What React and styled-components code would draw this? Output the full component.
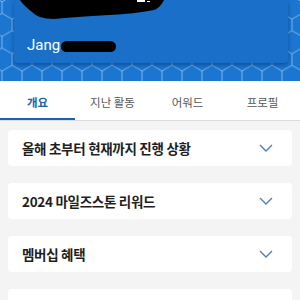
import React from 'react';
import styled, { createGlobalStyle } from 'styled-components';

const GlobalStyle = createGlobalStyle`
  html, body { margin: 0; padding: 0; }
  body {
    width: 300px;
    height: 300px;
    overflow: hidden;
    background: #f4f4f4;
    font-family: "Noto Sans CJK KR", "Noto Sans", sans-serif;
  }
`;

const Page = styled.div`
  width: 300px;
  height: 300px;
  overflow: hidden;
  background: #f4f4f4;
`;

const Header = styled.div`
  position: relative;
  height: 81px;
  background: #1b76d1;
  overflow: hidden;
`;

const PatternLayer = styled.svg`
  position: absolute;
  inset: 0;
`;

const MemberCard = styled.div`
  position: relative;
  margin: 0 12px 0 14px;
  height: 63px;
  background: #1a70c8;
  border-radius: 0 0 4px 4px;
  box-shadow: 0 2px 4px rgba(0, 30, 80, 0.45);
  display: flex;
  align-items: flex-end;
  padding: 0 0 9px 13px;
  box-sizing: border-box;
`;

const Redaction = styled.svg`
  position: absolute;
  left: 0;
  top: 0;
`;

const Name = styled.span`
  font-family: "Roboto", "Liberation Sans", sans-serif;
  font-size: 15px;
  color: #ffffff;
  display: flex;
  align-items: center;
  gap: 1px;
`;

const Blot = styled.span`
  display: inline-block;
  width: 55px;
  height: 11px;
  border-radius: 6px;
  background: #000;
  margin-top: 2px;
`;

const Tabs = styled.div`
  display: grid;
  grid-template-columns: repeat(4, 1fr);
  height: 39px;
  background: #fff;
  border-bottom: 1px solid #dcdcdc;
`;

const Tab = styled.div`
  display: flex;
  align-items: center;
  justify-content: center;
  font-size: 11.5px;
  font-weight: ${p => (p.$active ? 700 : 400)};
  color: ${p => (p.$active ? '#1a62b0' : '#555')};
  box-shadow: ${p => (p.$active ? 'inset 0 -2px 0 #1a62b0' : 'none')};
  padding-top: 2px;
`;

const List = styled.div`
  display: flex;
  flex-direction: column;
  gap: 17px;
  padding: 9px 8px 0;
`;

const Row = styled.div`
  height: 36px;
  background: #fff;
  border-radius: 4px;
  display: flex;
  align-items: center;
  justify-content: space-between;
  padding: 0 19px 0 14px;
  flex-shrink: 0;
`;

const RowTitle = styled.span`
  font-size: 13.5px;
  font-weight: 700;
  color: #1e1e1e;
  letter-spacing: -0.3px;
`;

const Chevron = () => (
  <svg width="14" height="8" viewBox="0 0 14 8">
    <path d="M1 1 L7 7 L13 1" fill="none" stroke="#4a7db6" strokeWidth="1.3" />
  </svg>
);

const rows = ['올해 초부터 현재까지 진행 상황', '2024 마일즈스톤 리워드', '멤버십 혜택', ''];

export default function App() {
  return (
    <Page>
      <GlobalStyle />
      <Header>
        <PatternLayer width="300" height="81">
          <defs>
            <pattern id="cube" width="20" height="34.64" patternUnits="userSpaceOnUse" x="-8" y="-4">
              <path
                d="M0 0 L10 5.77 L20 0 M10 5.77 V17.32 M0 23.09 L10 17.32 L20 23.09 M0 23.09 V34.64 M20 23.09 V34.64"
                fill="none"
                stroke="rgba(255,255,255,0.55)"
                strokeWidth="0.8"
              />
            </pattern>
          </defs>
          <rect width="300" height="81" fill="url(#cube)" />
        </PatternLayer>
        <MemberCard>
          <Redaction width="274" height="22">
            <path d="M6 0 H150 Q146 8 140 10 Q120 14 95 15 Q60 17 40 19 Q24 19 18 12 Q10 6 6 0 Z" fill="#000" />
            <path d="M123 0 h8 v2 h-8 z M133 1 h3 v1 h-3 z" fill="#fff" />
          </Redaction>
          <Name>
            Jang
            <Blot />
          </Name>
        </MemberCard>
      </Header>
      <Tabs>
        <Tab $active>개요</Tab>
        <Tab>지난 활동</Tab>
        <Tab>어워드</Tab>
        <Tab>프로필</Tab>
      </Tabs>
      <List>
        {rows.map((r, i) => (
          <Row key={i}>
            <RowTitle>{r}</RowTitle>
            {r && <Chevron />}
          </Row>
        ))}
      </List>
    </Page>
  );
}
